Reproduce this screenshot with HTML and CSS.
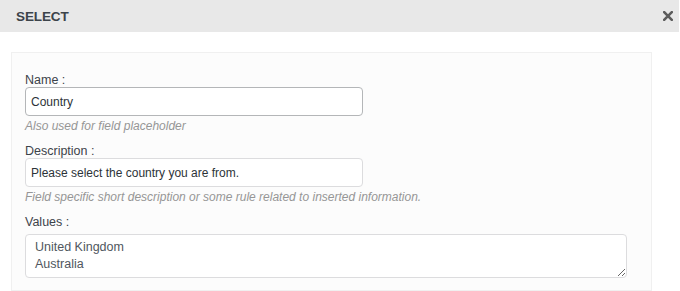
FILE: index.html
```html
<!DOCTYPE html>
<html>
<head>
<meta charset="utf-8">
<link rel="stylesheet" href="styles.css">
</head>
<body>
<div class="modal">
  <div class="modal-header">
    <h1 class="modal-title">SELECT</h1>
    <button class="modal-close" aria-label="Close">
      <svg width="10" height="10" viewBox="0 0 10 10"><path d="M1.2 1.2 L8.8 8.8 M8.8 1.2 L1.2 8.8" stroke="#5c5c5c" stroke-width="2.6" stroke-linecap="square"/></svg>
    </button>
  </div>
  <div class="modal-body">
    <div class="panel">
      <div class="field">
        <label class="field-label">Name :</label>
        <input class="field-input focused" type="text" value="Country">
        <p class="field-help">Also used for field placeholder</p>
      </div>
      <div class="field">
        <label class="field-label">Description :</label>
        <input class="field-input" type="text" value="Please select the country you are from.">
        <p class="field-help">Field specific short description or some rule related to inserted information.</p>
      </div>
      <div class="field">
        <label class="field-label">Values :</label>
        <textarea class="field-textarea">United Kingdom
Australia</textarea>
      </div>
    </div>
  </div>
</div>
</body>
</html>
```
FILE: styles.css
```css
html, body {
  margin: 0;
  padding: 0;
  background: #ffffff;
}
body {
  font-family: "Liberation Sans", Arial, sans-serif;
  width: 680px;
  height: 291px;
  overflow: hidden;
}
.modal {
  width: 679px;
}
.modal-header {
  height: 32px;
  background: #e8e8e8;
  display: flex;
  align-items: center;
  justify-content: space-between;
  padding: 0 6px 0 16px;
  box-sizing: border-box;
}
.modal-title {
  margin: 0;
  font-size: 13.5px;
  font-weight: bold;
  color: #3c434a;
  letter-spacing: -0.1px;
}
.modal-close {
  border: 0;
  background: none;
  padding: 0;
  width: 10px;
  height: 10px;
  display: flex;
  margin-top: -1px;
}
.modal-body {
  padding: 20px 0 0 11px;
}
.panel {
  width: 641px;
  box-sizing: border-box;
  background: #fcfcfc;
  border: 1px solid #f0f0f0;
  padding: 21px 13px 12px;
}
.field {
  display: flex;
  flex-direction: column;
  align-items: flex-start;
}
.field + .field {
  margin-top: 12px;
}
.field-label {
  font-size: 12.5px;
  line-height: 13px;
  color: #3c434a;
}
.field-input {
  margin: 0;
  width: 338px;
  height: 29px;
  box-sizing: border-box;
  border: 1px solid #dcdcde;
  border-radius: 4px;
  background: #ffffff;
  padding: 0 5px;
  font-family: "Liberation Sans", Arial, sans-serif;
  font-size: 12px;
  color: #2c3338;
}
.field-input.focused {
  border-color: #b4b6b8;
}
.field-help {
  margin: 3px 0 0;
  font-size: 12px;
  line-height: 14px;
  font-style: italic;
  color: #969696;
}
.field-textarea {
  margin: 5px 0 0;
  width: 602px;
  height: 44px;
  box-sizing: border-box;
  border: 1px solid #dcdcde;
  border-radius: 4px;
  background: #ffffff;
  padding: 4px 9px;
  font-family: "Liberation Sans", Arial, sans-serif;
  font-size: 12.5px;
  line-height: 17px;
  color: #50575e;
  overflow: hidden;
}
```
